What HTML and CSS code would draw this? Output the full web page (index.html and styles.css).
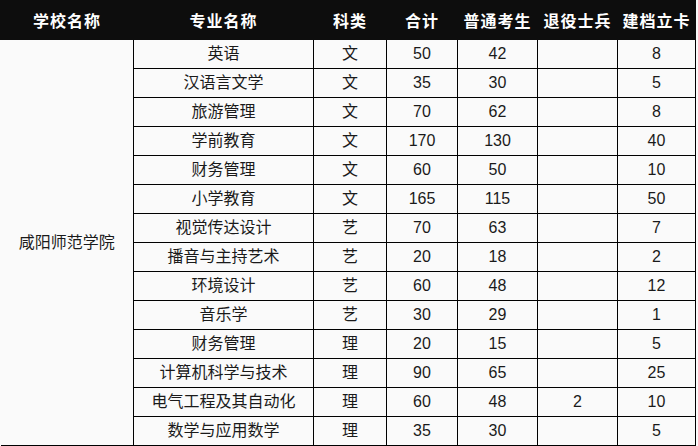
FILE: index.html
```
<!DOCTYPE html>
<html lang="zh">
<head>
<meta charset="utf-8">
<link rel="stylesheet" href="styles.css">
</head>
<body>
<table class="plan">
<colgroup>
<col class="c-school"><col class="c-major"><col class="c-type"><col class="c-total"><col class="c-normal"><col class="c-vet"><col class="c-card">
</colgroup>
<thead>
<tr><th>学校名称</th><th>专业名称</th><th>科类</th><th>合计</th><th>普通考生</th><th>退役士兵</th><th>建档立卡</th></tr>
</thead>
<tbody>
<tr><td class="school" rowspan="14">咸阳师范学院</td><td>英语</td><td>文</td><td>50</td><td>42</td><td></td><td>8</td></tr>
<tr><td>汉语言文学</td><td>文</td><td>35</td><td>30</td><td></td><td>5</td></tr>
<tr><td>旅游管理</td><td>文</td><td>70</td><td>62</td><td></td><td>8</td></tr>
<tr><td>学前教育</td><td>文</td><td>170</td><td>130</td><td></td><td>40</td></tr>
<tr><td>财务管理</td><td>文</td><td>60</td><td>50</td><td></td><td>10</td></tr>
<tr><td>小学教育</td><td>文</td><td>165</td><td>115</td><td></td><td>50</td></tr>
<tr><td>视觉传达设计</td><td>艺</td><td>70</td><td>63</td><td></td><td>7</td></tr>
<tr><td>播音与主持艺术</td><td>艺</td><td>20</td><td>18</td><td></td><td>2</td></tr>
<tr><td>环境设计</td><td>艺</td><td>60</td><td>48</td><td></td><td>12</td></tr>
<tr><td>音乐学</td><td>艺</td><td>30</td><td>29</td><td></td><td>1</td></tr>
<tr><td>财务管理</td><td>理</td><td>20</td><td>15</td><td></td><td>5</td></tr>
<tr><td>计算机科学与技术</td><td>理</td><td>90</td><td>65</td><td></td><td>25</td></tr>
<tr><td>电气工程及其自动化</td><td>理</td><td>60</td><td>48</td><td>2</td><td>10</td></tr>
<tr><td>数学与应用数学</td><td>理</td><td>35</td><td>30</td><td></td><td>5</td></tr>
</tbody>
</table>
</body>
</html>
```
FILE: styles.css
```
html, body {
  margin: 0;
  padding: 0;
  background: #fafafa;
}
.plan {
  border-collapse: collapse;
  table-layout: fixed;
  width: 696px;
  font-family: "Liberation Sans", "Noto Sans CJK SC", sans-serif;
  font-size: 16px;
  color: #1a1a1a;
  background: #fafafa;
}
.c-school { width: 133px; }
.c-major { width: 180px; }
.c-type { width: 73px; }
.c-total { width: 71px; }
.c-normal { width: 80px; }
.c-vet { width: 80px; }
.c-card { width: 78px; }
.plan th {
  height: 38px;
  padding: 0;
  background: #0d0d0d;
  color: #fff;
  font-weight: bold;
  font-size: 16px;
  letter-spacing: 1px;
  border: 1px solid #0d0d0d;
  text-align: center;
}
.plan td {
  height: 28px;
  padding: 0;
  text-align: center;
  border: 1px solid #000;
  line-height: 20px;
}
.plan td.school {
  border-left: none;
  border-top: none;
}
```
